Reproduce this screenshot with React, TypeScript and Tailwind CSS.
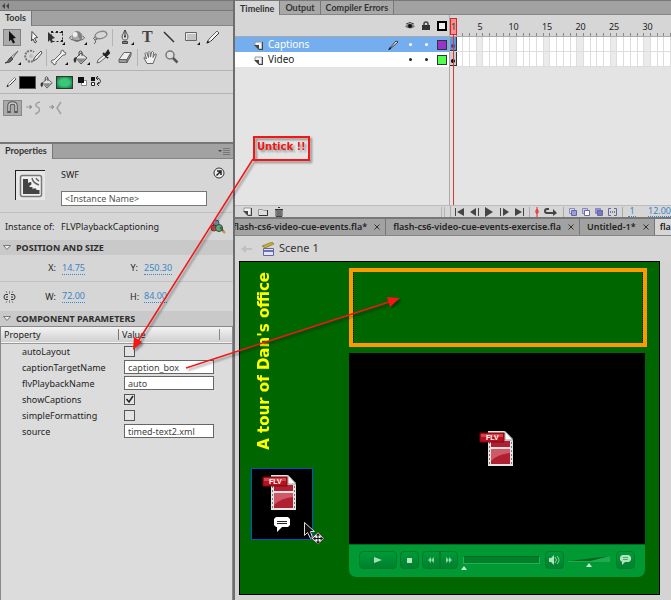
import { useState } from "react";
import type { ReactNode } from "react";
import { clsx } from "clsx";

const UI = "font-['Noto_Sans','Open_Sans',sans-serif]";
const TAB = "font-['Lato','Noto_Sans',sans-serif] font-bold";

const DARK = "#333";

interface GlyphProps {
    children: ReactNode;
    w?: number;
    h?: number;
    box?: string;
}

function Glyph({ children, w = 20, h = 18, box }: GlyphProps) {
    return (
        <svg width={w} height={h} viewBox={box ?? `0 0 ${w} ${h}`} fill="none" className="block shrink-0" aria-hidden="true">
            {children}
        </svg>
    );
}

const corner = <path d="M19 14v3h-3z" fill="#111" />;

const bucket = (
    <>
        <path d="M5 10l5-5 6 5-6 6z" fill="#e4e4e4" stroke="#555" />
        <path d="M6 10.500h9L10 15z" fill="#8a8a8a" />
        <path d="M8 8V4q1-2 3 0v4" stroke="#444" />
        <path d="M5 9c-3 1-3 4-1 6 1-1 2-3 1-6z" fill={DARK} />
    </>
);

const pencil = (
    <>
        <path d="M4 15l2-4 8-8 2 2-8 8z" fill="#f2f2f2" stroke="#666" />
        <path d="M8 13l8-8" stroke="#333" />
        <path d="M3.500 15.500l1-3 2 2z" fill="#111" />
    </>
);

const toolRows: { name: string; icon: ReactNode; gap?: boolean }[][] = [
    [
        { name: "Selection", icon: <path d="M7 3l7 7-3 .5 2 4-2 1-2-4-2 2z" fill="#111" /> },
        { name: "Subselection", icon: <path d="M8 3.500l5.500 6-3 .5 2 4-1.500 1-2-4-1.500 2z" fill="#fff" stroke="#444" /> },
        {
            name: "Free Transform",
            icon: (
                <>
                    <path d="M5.500 4.500h11v9h-11z" stroke="#222" strokeDasharray="2 2" />
                    <path d="M2 4l7 6-3 1 1 3-2 1-1-3-2 2z" fill="#333" />
                    <path d="M5 3h2v2H5zM15 3h2v2h-2zM15 12h2v2h-2zM10 3h2v2h-2z" fill="#222" />
                    {corner}
                </>
            ),
        },
        {
            name: "3D Rotation",
            icon: (
                <>
                    <circle cx="9" cy="8.500" r="5" fill="#aaa" stroke="#888" />
                    <path d="M9 3.500a5 5 0 0 1 4 8q-3-1-4-8z" fill="#808080" />
                    <circle cx="7" cy="6.500" r="2.500" fill="#eee" />
                    <path d="M3 8q-3 2 0 3.500 6 2.500 12 0 3-1.500 0-3.500" stroke="#666" />
                    {corner}
                </>
            ),
        },
        {
            name: "Lasso",
            icon: (
                <>
                    <ellipse cx="11" cy="7" rx="6" ry="3.500" transform="rotate(-15 11 7)" stroke="#888" strokeWidth="1.500" />
                    <path d="M5 9q-3 1 0 3 3 0 1-2M5 12q2 2-1 4" stroke="#666" />
                </>
            ),
        },
        {
            name: "Pen",
            gap: true,
            icon: (
                <>
                    <path d="M10 2L7 8q0 3 1.500 4h3q1.500-1 1.500-4z" fill="#ddd" stroke="#555" />
                    <path d="M10 2v6" stroke="#333" />
                    <circle cx="10" cy="8.500" r="1" fill="#222" />
                    <path d="M7.500 13.500h5v2h-5z" fill="#888" stroke="#444" />
                    {corner}
                </>
            ),
        },
        { name: "Text", icon: <text x="5" y="14" fontSize="16" fontFamily="Liberation Serif, serif" fontWeight="bold" fill="#444">T</text> },
        { name: "Line", icon: <path d="M5 4l10 10" stroke="#333" strokeWidth="1.500" /> },
        {
            name: "Rectangle",
            icon: (
                <>
                    <path d="M4.500 4.500h11v8h-11z" fill="#c4c4c4" stroke="#666" />
                    <path d="M5.500 12V5.500H15" stroke="#eee" />
                    {corner}
                </>
            ),
        },
        { name: "Pencil", icon: pencil },
    ],
    [
        {
            name: "Brush",
            icon: (
                <>
                    <path d="M16 3l-6 8-2-1z" fill="#eee" stroke="#666" />
                    <path d="M9 9l2 2q-2 4-8 4 3-1 4-4z" fill="#666" stroke="#444" />
                    {corner}
                </>
            ),
        },
        {
            name: "Deco",
            icon: (
                <>
                    <path d="M3 12a5 5 0 0 1 7-8" stroke="#777" strokeWidth="2" strokeDasharray="2 1" />
                    <path d="M4 13q4 2 7-2" stroke="#777" strokeWidth="2" strokeDasharray="2 1" />
                    <path d="M17 3l-6 6-2 4 4-2 5-6z" fill="#eee" stroke="#555" />
                    <circle cx="7" cy="8" r="2" fill="#bbb" />
                </>
            ),
        },
        {
            name: "Bone",
            gap: true,
            icon: (
                <>
                    <path d="M5 12l7-7V3l2-1 1 2 2 1-1 2h-2l-7 7v2l-2 1-1-2-2-1 1-2z" fill="#f0f0f0" stroke="#666" />
                    {corner}
                </>
            ),
        },
        { name: "Paint Bucket", icon: <>{bucket}{corner}</> },
        {
            name: "Eyedropper",
            icon: (
                <>
                    <path d="M4 15l1-3 6-5 2 2-6 5z" fill="#eee" stroke="#666" />
                    <path d="M10 5l5 5M12 7l3-4 1 2-3 3z" stroke="#222" strokeWidth="2" />
                </>
            ),
        },
        {
            name: "Eraser",
            icon: (
                <>
                    <path d="M4 11.500l5-7h7l-4 7z" fill="#eee" stroke="#666" />
                    <path d="M4 11.500v3h8v-3zM12 11.500l4-7v3l-4 7z" fill="#999" stroke="#666" />
                </>
            ),
        },
        {
            name: "Hand",
            gap: true,
            icon: (
                <path
                    d="M7 15.500L4 10q0-2 2.500 1L5 5.500q1-2 2 0l1.500 4-.5-5q1-2 2 0l.5 4.500 1-5q1-1.500 2 .5l-.5 5L15 6q2-1 1 2l-2 5-1 2.500z"
                    fill="#f0f0f0"
                    stroke="#666"
                />
            ),
        },
        {
            name: "Zoom",
            icon: (
                <>
                    <circle cx="8" cy="7" r="4" fill="#ddd" stroke="#777" strokeWidth="1.500" />
                    <path d="M11 10l4.500 4.500" stroke="#555" strokeWidth="2.500" />
                </>
            ),
        },
    ],
];

function PanelTabs({ children }: { children: ReactNode }) {
    return <div className="flex h-[15px] items-stretch border-b border-[#858585] bg-[#a2a2a2] text-[#333]">{children}</div>;
}

function ToolsPanel() {
    const [active, setActive] = useState("Selection");

    return (
        <section className="h-[131px] bg-[#d6d6d6]">
            <PanelTabs>
                <h2 className={clsx(TAB, "-mb-px border-r border-[#777] bg-[#d6d6d6] px-[5px] text-[9px] leading-[14px]")}>Tools</h2>
            </PanelTabs>
            <div className="flex flex-col pt-px">
                {toolRows.map((row, i) => (
                    <div key={i} className="flex h-5 items-center pl-px">
                        {row.map((tool) => (
                            <div key={tool.name} className="flex items-center">
                                {tool.gap && <span className="mx-px h-[17px] w-px bg-[#b4b4b4]" />}
                                <button
                                    aria-label={tool.name}
                                    onClick={() => setActive(tool.name)}
                                    className={clsx(
                                        "flex h-[17px] items-center justify-center",
                                        active === tool.name ? "mx-0.5 w-[18px] overflow-hidden border border-[#808080] bg-[#ababab]" : "w-[22px]"
                                    )}
                                >
                                    <Glyph>{tool.icon}</Glyph>
                                </button>
                            </div>
                        ))}
                    </div>
                ))}
            </div>
            <div className="mt-[3px] flex h-[23px] items-center border-t border-[#b2b2b2] pl-1">
                <Glyph w={15} h={14} box="0 0 20 18">{pencil}</Glyph>
                <button aria-label="Stroke color" className="h-[13px] w-[17px] border border-[#555] bg-black" />
                <span className="mr-0.5 ml-1"><Glyph w={14} h={14} box="2 1 16 16">{bucket}</Glyph></span>
                <button aria-label="Fill color" className="h-[13px] w-[17px] border border-[#333] bg-radial from-[#38c878] from-45% to-[#0a6b34]" />
                <button aria-label="Black and white" className="ml-[5px]">
                    <Glyph w={10} h={12}>
                        <path d="M3.500 4.500h5v5h-5z" fill="#fff" stroke="#888" />
                        <path d="M0 1h6v6H0z" fill="#111" />
                    </Glyph>
                </button>
                <button aria-label="Swap colors" className="ml-[3px]">
                    <Glyph w={12} h={12}>
                        <path d="M0 1h4v4H0z" fill="#111" />
                        <path d="M.5 6.500h3v3h-3z" fill="#fff" stroke="#222" />
                        <path d="M5 2h2q2.500 1 2.500 3.500-.5 2.500-3.500 2.500M7 0L5 2l2 2M8 6L6 8l2 2" stroke="#333" />
                    </Glyph>
                </button>
            </div>
            <div className="flex h-[28px] items-center gap-1 border-t border-[#b2b2b2] pl-[3px]">
                <button aria-label="Snap to objects" className="flex h-4 w-[19px] items-center justify-center border border-[#888] bg-[#aaa]">
                    <Glyph w={13} h={13}>
                        <path d="M3 12V5q0-3 3.500-3T10 5v7" stroke="#555" strokeWidth="3.500" />
                        <path d="M3 10V5q0-3 3.500-3T10 5v5" stroke="#ccc" strokeWidth="1.500" />
                    </Glyph>
                </button>
                <button aria-label="Smooth" className="w-[18px]">
                    <Glyph w={18} h={14}>
                        <path d="M0 6h6M4 4l2 2-2 2z" stroke="#999" fill="#999" />
                        <path d="M14 1q-5 1-4 4l3 2q2 4-4 6" stroke="#a0a0a0" strokeWidth="1.500" />
                    </Glyph>
                </button>
                <button aria-label="Straighten" className="w-[18px]">
                    <Glyph w={18} h={14}>
                        <path d="M1 6h5M4 4l2 2-2 2z" stroke="#999" fill="#999" />
                        <path d="M13 1l-4 6 4 6" stroke="#a0a0a0" strokeWidth="1.500" />
                    </Glyph>
                </button>
            </div>
        </section>
    );
}

function SectionTitle({ children }: { children: ReactNode }) {
    return (
        <h3 className={clsx(UI, "flex h-[15px] items-center gap-[5px] bg-[#c9c9c9] pl-[3px] text-[9px] font-bold text-[#2d2d2d]")}>
            <Glyph w={8} h={7}>
                <path d="M.5 1.500h7L4 5.500z" fill="#eee" stroke="#777" />
            </Glyph>
            {children}
        </h3>
    );
}

function HotText({ label, value, className }: { label: string; value: string; className: string }) {
    return (
        <span className="flex items-center">
            <span className={clsx("text-right", className)}>{label}</span>
            <button className="ml-1.5 h-[13px] border-b border-dotted border-[#3a87c8] leading-3 text-[#3a87c8]">{value}</button>
        </span>
    );
}

const params: { name: string; value: string | boolean }[] = [
    { name: "autoLayout", value: false },
    { name: "captionTargetName", value: "caption_box" },
    { name: "flvPlaybackName", value: "auto" },
    { name: "showCaptions", value: true },
    { name: "simpleFormatting", value: false },
    { name: "source", value: "timed-text2.xml" },
];

function PropertiesPanel() {
    return (
        <section className={clsx(UI, "flex grow flex-col border-t-2 border-[#777] bg-[#d6d6d6] text-[9px] text-[#222]")}>
            <PanelTabs>
                <h2 className={clsx(TAB, "-mb-px border-r border-[#777] bg-[#d6d6d6] px-[5px] text-[9px] leading-[14px]")}>Properties</h2>
                <button aria-label="Panel menu" className="mr-[3px] ml-auto">
                    <Glyph w={12} h={8}>
                        <path d="M0 3h4L2 5z" fill="#444" />
                        <path d="M5 1.500h7M5 3.500h7M5 5.500h7M5 7.500h7" stroke="#777" />
                    </Glyph>
                </button>
            </PanelTabs>
            <div className="flex h-[54px] border-b border-[#c0c0c0] pt-[11px]">
                <div className="ml-[15px] flex h-[30px] w-[30px] items-center justify-center border-t border-l border-[#222] bg-[#e6e6e6]">
                    <Glyph w={24} h={24}>
                        <rect x="1.500" y="1.500" width="21" height="21" rx="2" fill="#f0f0f0" stroke="#777" strokeWidth="1.500" />
                        <path d="M4 5h5v4q3-2 3.500 0t-2 3v1h3v2q4-2 4 1h3v4H4z" fill="#444" />
                        <path d="M13 4q1 5 7 7M17 4q1 2 3 3" stroke="#666" strokeWidth="1.500" />
                    </Glyph>
                </div>
                <div className="ml-4 w-[146px]">
                    <div className="h-[21px] leading-[9px]">SWF</div>
                    <input
                        aria-label="Instance name"
                        placeholder="<Instance Name>"
                        className="block h-[15px] w-full border border-[#777] bg-white px-[3px] placeholder:text-[#555]"
                    />
                </div>
                <button aria-label="Help" className="-mt-[3px] ml-1.5 self-start">
                    <Glyph w={12} h={12}>
                        <circle cx="6" cy="6" r="5" fill="#eee" stroke="#333" />
                        <path d="M4 4h4v4M8 4L3.500 8.500" stroke="#222" strokeWidth="1.500" />
                    </Glyph>
                </button>
            </div>
            <div className="flex h-[27px] items-center pl-[5px]">
                <span className="w-[56px] whitespace-nowrap">Instance of:</span>
                <span>FLVPlaybackCaptioning</span>
                <span className="mr-[7px] ml-auto">
                    <Glyph w={16} h={15}>
                        <circle cx="6" cy="4" r="3" fill="#829bc8" stroke="#456" />
                        <circle cx="4" cy="9" r="3" fill="#c95050" stroke="#733" />
                        <circle cx="9" cy="9" r="3.500" fill="#63a878" stroke="#253" />
                        <path d="M10 8l4 5" stroke="#555" strokeWidth="2" />
                        <path d="M13 12l2 2" stroke="#b93" strokeWidth="2" />
                    </Glyph>
                </span>
            </div>
            <SectionTitle>POSITION AND SIZE</SectionTitle>
            <div className="flex h-[27px] items-center border-b border-[#c0c0c0]">
                <HotText label="X:" value="14.75" className="w-14" />
                <span className="w-[45px]" />
                <HotText label="Y:" value="250.30" className="w-2" />
            </div>
            <div className="flex h-[29px] items-center">
                <span className="ml-[3px]">
                    <Glyph w={13} h={12}>
                        <path d="M5 3.500H3Q1 3.500 1 6t2 2.500h2M8 3.500h2q2 0 2 2.500t-2 2.500H8M3 6h2M8 6h2" stroke="#333" />
                        <path d="M3 0l1 2M6.500 0v3M10 0L9 2M3 12l1-2M6.500 12V9M10 12l-1-2" stroke="#888" />
                    </Glyph>
                </span>
                <HotText label="W:" value="72.00" className="w-10" />
                <span className="w-[45px]" />
                <HotText label="H:" value="84.00" className="w-2" />
            </div>
            <SectionTitle>COMPONENT PARAMETERS</SectionTitle>
            <div className="grow border border-b-0 border-[#888] bg-[#dcdcdc]">
                <table className="w-full table-fixed border-collapse">
                    <thead>
                        <tr className="h-4 border-b border-[#999] bg-linear-to-b from-[#f4f4f4] to-[#cfcfcf]">
                            <th className="w-[117px] p-0 pl-[3px] text-left leading-[14px] font-normal">Property</th>
                            <th className="p-0 text-left leading-[14px] font-normal">
                                <span className="flex h-[11px] items-center border-l border-[#777] pl-[3px]">
                                    Value
                                    <span className="mr-3 ml-auto h-[11px] w-px bg-[#888]" />
                                </span>
                            </th>
                        </tr>
                    </thead>
                    <tbody>
                        {params.map(({ name, value }) => (
                            <tr key={name} className="h-4">
                                <td className="p-0 pl-[21px] leading-[15px]">
                                    <label htmlFor={name}>{name}</label>
                                </td>
                                <td className="p-0 pl-1.5">
                                    {typeof value === "boolean" ? (
                                        <span className="relative block h-[11px] w-[11px]">
                                            <input
                                                id={name}
                                                type="checkbox"
                                                defaultChecked={value}
                                                className="peer block h-[11px] w-[11px] appearance-none border border-[#555] bg-[#e4e4e4]"
                                            />
                                            <svg viewBox="0 0 11 11" fill="none" className="pointer-events-none absolute inset-0 hidden peer-checked:block">
                                                <path d="M2.500 5l2.500 3 4-6" stroke="#222" strokeWidth="1.500" />
                                            </svg>
                                        </span>
                                    ) : (
                                        <input id={name} defaultValue={value} className="block h-[14px] w-[90px] border border-[#666] bg-white px-[3px] text-[#444]" />
                                    )}
                                </td>
                            </tr>
                        ))}
                    </tbody>
                </table>
            </div>
        </section>
    );
}

const layers = [
    { name: "Captions", color: "bg-[#9933cc]", selected: true },
    { name: "Video", color: "bg-[#4fff4f]", selected: false },
];

const FRAMES = Array.from({ length: 33 }, (_, i) => i + 1);

function LayerIcon() {
    return (
        <Glyph w={9} h={9}>
            <path d="M1 1h7v7H5L1 4z" fill="#f4f4f4" stroke="#999" />
            <path d="M0 4h5v5zM8 1h1v8H5V8h3z" fill="#444" />
        </Glyph>
    );
}

function Layers() {
    return (
        <div className="w-[215px] shrink-0 border-r border-[#aaa]">
            <div className="flex h-[22px] items-center justify-end gap-1.5 border-b border-[#aaa] bg-[#d6d6d6] pt-px pr-0.5">
                <Glyph w={10} h={10}>
                    <path d="M0 5.500q5-6 10 0-5 4-10 0z" fill="#777" />
                    <circle cx="5" cy="5" r="2" fill="#111" />
                    <path d="M1 3q4-3 8 0" stroke="#444" />
                </Glyph>
                <Glyph w={10} h={10}>
                    <path d="M3 5V3q0-2 2-2t2 2v2" stroke="#444" strokeWidth="1.500" />
                    <path d="M1 4h8v5H1z" fill="#333" />
                </Glyph>
                <span className="h-[10px] w-[10px] border-2 border-black bg-[#eee]" />
            </div>
            {layers.map((layer) => (
                <div
                    key={layer.name}
                    className={clsx("flex h-[15px] items-center pr-0.5 text-[10px] leading-3", layer.selected ? "bg-[#74aeee] text-white" : "bg-white text-[#222]")}
                >
                    <span className="mt-0.5 mr-[5px] ml-[19px]"><LayerIcon /></span>
                    <span className="grow pb-0.5">{layer.name}</span>
                    {layer.selected && (
                        <Glyph w={12} h={12}>
                            <path d="M2 10L9 2l2 1-8 7z" fill="#fff" stroke="#333" />
                            <path d="M1 11l2-3 1 2z" fill="#111" />
                        </Glyph>
                    )}
                    <span className="mr-[13px] ml-[10px] h-[3px] w-[3px] rounded-full bg-current" />
                    <span className="mr-[9px] h-[3px] w-[3px] rounded-full bg-current" />
                    <span className={clsx("h-[10px] w-[10px] border border-[#333]", layer.color)} />
                </div>
            ))}
        </div>
    );
}

function FrameGrid() {
    return (
        <div className="relative min-w-0 grow overflow-hidden">
            <div className="grid h-[22px] grid-cols-[repeat(33,minmax(0,1fr))] border-b border-[#aaa] bg-[#d6d6d6]">
                {FRAMES.map((n) => (
                    <span key={n} className="flex flex-col items-center justify-between pt-[6px] text-[9px] leading-3 text-[#222]">
                        <span className="h-3">{n % 5 === 0 ? n : ""}</span>
                        <span className="h-[3px] w-px self-end bg-[#888]" />
                    </span>
                ))}
            </div>
            {layers.map((layer) => (
                <div key={layer.name} className="grid h-[15px] grid-cols-[repeat(33,minmax(0,1fr))] border-b border-[#ddd] bg-white">
                    {FRAMES.map((n) => (
                        <span
                            key={n}
                            className={clsx(
                                "flex items-end justify-center border-r",
                                n === 1 ? "border-b border-[#333] pb-0.5" : "border-[#ddd]",
                                n === 1 && (layer.selected ? "bg-[#5b97de]" : "bg-[#ccc]"),
                                n % 5 === 0 && "bg-[#ebebeb]"
                            )}
                        >
                            {n === 1 && <span className={clsx("h-1 w-1 shrink-0 rounded-full", layer.selected ? "bg-[#3a4a80]" : "bg-black")} />}
                        </span>
                    ))}
                </div>
            ))}
            {/* playhead */}
            <div className="absolute top-[3px] left-0 h-[17px] w-[7px] border border-[#dd2222] bg-[#ff8888]/90 text-center text-[9px] leading-[15px]">1</div>
            <div className="absolute top-5 bottom-0 left-[3px] w-px bg-[#d33]" />
        </div>
    );
}

function TimelineFooter() {
    return (
        <div className="flex h-3 items-center border-t border-[#bbb] bg-[#d6d6d6] text-[9px] text-[#3a87c8]">
            <div className="flex w-[215px] shrink-0 items-center gap-[6px] pl-2">
                <button aria-label="New layer"><LayerIcon /></button>
                <button aria-label="New folder">
                    <Glyph w={10} h={10}>
                        <path d="M.5 2.500h4l1 1h4v5h-9z" fill="#ddd" stroke="#999" />
                        <path d="M9.500 3v5.500H1" stroke="#333" />
                    </Glyph>
                </button>
                <button aria-label="Delete">
                    <Glyph w={10} h={10}>
                        <path d="M2 3h6v6.500H2z" fill="#aaa" stroke="#444" />
                        <path d="M1 2.500h8M4 .5h2M4 4v5M6 4v5" stroke="#333" />
                    </Glyph>
                </button>
                <span className="mr-[5px] ml-auto h-2.5 w-1 border-x border-[#b4b4b4]" />
            </div>
            <div className="flex grow items-center gap-[5px] border-l border-[#aaa] pl-[3px] whitespace-nowrap">
                {[
                    { name: "First frame", d: "M1 1h1v8H1zM10 1v8L3 5z" },
                    { name: "Step back", d: "M7 1v8L1 5zM9 1h1v8H9z" },
                    { name: "Play", d: "M1 0l8 5-8 5z" },
                    { name: "Step forward", d: "M1 1h1v8H1zM4 1l6 4-6 4z" },
                    { name: "Last frame", d: "M1 1l7 4-7 4zM9 1h1v8H9z" },
                ].map((b) => (
                    <button key={b.name} aria-label={b.name}>
                        <Glyph w={10} h={10}><path d={b.d} fill="#444" /></Glyph>
                    </button>
                ))}
                <span className="h-2.5 w-px bg-[#aaa]" />
                <Glyph w={4} h={10}><path d="M2 0v10M1 3h2v3H1z" stroke="#e22" /></Glyph>
                <Glyph w={14} h={10}>
                    <path d="M5 2H3Q1 2 1 4t2 2h7" stroke="#444" strokeWidth="2" />
                    <path d="M9 2l4 4-4 3z" fill="#444" />
                </Glyph>
                <span className="h-2.5 w-px bg-[#aaa]" />
                {[
                    { front: "#9c9cdc", back: "#dcdcf2" },
                    { front: "#fff", back: "#c8c8ee" },
                    { front: "#7777c0", back: "#9494d0" },
                ].map(({ front, back }) => (
                    <Glyph key={front} w={8} h={10}>
                        <path d="M.5 1.500h5v5h-5z" fill={back} stroke="#8888bb" />
                        <path d="M2.500 3.500h5v5h-5z" fill={front} stroke="#6666aa" />
                    </Glyph>
                ))}
                <Glyph w={9} h={10}>
                    <path d="M3 1.500H.5v7H3M6 1.500h2.500v7H6" stroke="#6666aa" />
                    <path d="M2 4.500h1v1H2zM4 4.500h1v1H4zM6 4.500h1v1H6z" fill="#222" />
                </Glyph>
                <span className="h-2.5 w-px bg-[#aaa]" />
                <button className="w-2 border-b border-dotted leading-[10px]">1</button>
                <button className="ml-[7px] border-b border-dotted leading-[10px]">12.00</button>
            </div>
        </div>
    );
}

const docs = ["flash-cs6-video-cue-events.fla*", "flash-cs6-video-cue-events-exercise.fla", "Untitled-1*"];

function DocumentTabs() {
    return (
        <nav className={clsx(UI, "flex h-[17px] overflow-hidden border-b border-[#858585] bg-[#a2a2a2] text-[9px] leading-4 font-semibold whitespace-nowrap text-[#222]")}>
            {docs.map((doc, i) => (
                <div key={doc} className={clsx("flex shrink-0 items-center gap-[7px] border-r border-[#777] pr-[5px]", i > 0 ? "pl-[7px]" : "-ml-0.5")}>
                    <button>{doc}</button>
                    <button aria-label={`Close ${doc}`}>
                        <Glyph w={6} h={6}><path d="M.5 .5l5 5M5.500 .5l-5 5" stroke="#333" /></Glyph>
                    </button>
                </div>
            ))}
            <button className="grow bg-[#d6d6d6] pl-[5px] text-left">fla</button>
        </nav>
    );
}

function FlvIcon() {
    return (
        <svg width="36" height="38" viewBox="0 0 36 38" fill="none" aria-hidden="true">
            <path d="M9 1h17l8 8v27H9z" fill="#e4e4e4" />
            <path d="M26 1l8 9h-8z" fill="#fff" stroke="#444" strokeWidth=".5" />
            <path d="M12 11h19v6H12zM12 19h19v15H12z" fill="#b02030" />
            <path d="M12 19h19v4q-12 1-19 8z" fill="#cf5a66" />
            <path d="M10.500 12v24M32.500 12v24" stroke="#777" strokeDasharray="2 2" />
            <path d="M1 3h24v9H1z" fill="#b8101c" stroke="#7d0a12" />
            <path d="M2 4h22v3H2z" fill="#d8404a" />
            <text x="7" y="10" fontSize="7" fontWeight="bold" fontFamily="Liberation Sans, sans-serif" fill="#fff">FLV</text>
        </svg>
    );
}

const playerButton = "flex h-[18px] shrink-0 items-center justify-center rounded-[4px] border border-[#007a2c] bg-linear-to-b from-[#009a38] to-[#00802c]";

function PlayerBar() {
    return (
        <div className="flex h-[33px] items-center rounded-b-[7px] border-t border-[#006a20] bg-[#009933] px-2.5 pb-0.5">
            <button aria-label="Play" className={clsx(playerButton, "w-[38px]")}>
                <Glyph w={8} h={6}><path d="M0 0l8 3-8 3z" fill="#a9dcb8" /></Glyph>
            </button>
            <button aria-label="Stop" className={clsx(playerButton, "ml-[3px] w-[19px]")}>
                <span className="h-[5px] w-[5px] bg-[#b9e3c5]" />
            </button>
            <button aria-label="Rewind" className={clsx(playerButton, "ml-[3px] w-[18px] rounded-r-none")}>
                <Glyph w={6} h={6}><path d="M3 0v6L0 3zM6 0v6L3 3z" fill="#8fd0a3" /></Glyph>
            </button>
            <button aria-label="Forward" className={clsx(playerButton, "w-[18px] rounded-l-none")}>
                <Glyph w={6} h={6}><path d="M0 0v6l3-3zM3 0v6l3-3z" fill="#8fd0a3" /></Glyph>
            </button>
            <div className="relative ml-[5px] h-2 grow border border-[#2aab55] border-t-[#006622] bg-[#008029]">
                <span className="absolute top-[9px] -left-[3px]">
                    <Glyph w={6} h={4}><path d="M3 0l3 4H0z" fill="#c9ebd2" /></Glyph>
                </span>
            </div>
            <button aria-label="Mute" className={clsx(playerButton, "ml-[5px] w-[19px]")}>
                <Glyph w={11} h={10}>
                    <path d="M0 3h2l3-3v10L2 7H0z" fill="#b5e0c0" />
                    <path d="M6 2q3 3 0 6M8 1q4 4 0 8" stroke="#8fd0a3" />
                </Glyph>
            </button>
            <span className="mr-1.5 ml-1">
                <Glyph w={42} h={14}>
                    <path d="M0 8L42 3v6H0z" fill="#1faa4c" />
                    <path d="M0 8L42 3 22 8z" fill="#006622" />
                    <path d="M21 10l3 4h-6z" fill="#c9ebd2" />
                </Glyph>
            </span>
            <button aria-label="Captions" className={clsx(playerButton, "w-[19px]")}>
                <Glyph w={11} h={10}>
                    <path d="M2 0h7l2 2v3L9 7H5L2 10V7L0 5V2z" fill="#b5e0c0" />
                    <path d="M3 2.500h5M3 4.500h5" stroke="#4dab6c" />
                </Glyph>
            </button>
        </div>
    );
}

function Stage() {
    return (
        <div className="grow bg-[#d4d4d4] pl-1">
            <div className="relative h-[334px] w-[421px] border border-black bg-[#006600]">
                <p className="absolute top-[10px] left-[14px] rotate-180 font-['DejaVu_Sans',sans-serif] text-[15px] leading-5 font-bold whitespace-nowrap text-[#ffff00] [writing-mode:vertical-rl]">
                    A tour of Dan's office
                </p>
                <div className="absolute top-1.5 left-[109px] h-[79px] w-[298px] border-4 border-[#ff9900]">
                    <div className="h-full border-x border-dotted border-[#002a00]" />
                </div>
                <div className="absolute top-[91px] left-[109px] w-[296px]">
                    <div className="flex h-[191px] items-center justify-center bg-black">
                        <FlvIcon />
                    </div>
                    <PlayerBar />
                </div>
                <div className="absolute top-[206px] left-[11px] flex h-[72px] w-[62px] flex-col items-center border border-[#0055cc] bg-black pt-[5px]">
                    <span className="pr-1"><FlvIcon /></span>
                    <span className="mt-[5px]">
                        <Glyph w={16} h={15}>
                            <path d="M2 0h12l2 2v6l-2 2H8l-5 5v-5H2L0 8V2z" fill="#fff" />
                            <path d="M3 4.500h10M3 6.500h10" stroke="#222" />
                        </Glyph>
                    </span>
                </div>
                <span className="absolute top-[259px] left-[63px]">
                    <Glyph w={22} h={24}>
                        <path d="M1.500 1.500v13l3-3 3 6 2-1-2-6h4z" fill="#111" stroke="#ddd" />
                        <path d="M15 11l6 6.500-6 6-6.500-6z" fill="#f4f4f4" stroke="#111" strokeWidth=".5" />
                        <path d="M15 13v9M10.500 17.500h9" stroke="#111" />
                        <path d="M15 12l2 2.500h-4zM15 23l2-2.500h-4zM10 17.500l2.500-2v4zM20 17.500l-2.500-2v4z" fill="#111" />
                    </Glyph>
                </span>
            </div>
        </div>
    );
}

function Workspace() {
    return (
        <main className={clsx(UI, "flex min-w-0 grow flex-col text-[#333]")}>
            <div className="flex h-[15px] border-t border-[#777] bg-[#a2a2a2] text-[9px]">
                {["Timeline", "Output", "Compiler Errors"].map((tab, i) => (
                    <button
                        key={tab}
                        className={clsx(TAB, "border-r border-[#777] px-[5px] leading-[13px]", i === 0 ? "bg-[#d6d6d6]" : "border-b border-b-[#858585] bg-[#a8a8a8]")}
                    >
                        {tab}
                    </button>
                ))}
                <span className="grow border-b border-[#858585]" />
            </div>
            <div className="flex h-[190px] bg-[#e4e4e4]">
                <Layers />
                <FrameGrid />
            </div>
            <TimelineFooter />
            <div className="h-0.5 bg-[#777]" />
            <DocumentTabs />
            <div className="flex h-[25px] items-center bg-[#d6d6d6] pl-1.5 text-[11px]">
                <Glyph w={12} h={10}><path d="M0 5l5-4v3h6v2H5v3z" fill="#c0c0c0" /></Glyph>
                <span className="mr-1 ml-[9px]">
                    <Glyph w={13} h={14}>
                        <path d="M1.500 6.500h10v7h-10z" fill="#e4e4f4" stroke="#6666aa" />
                        <path d="M2 8h9v2H2z" fill="#6f6fc0" />
                        <path d="M0 4l10-4 2 2-9 4z" fill="#c4b030" stroke="#665a10" strokeWidth=".5" />
                    </Glyph>
                </span>
                Scene 1
            </div>
            <Stage />
        </main>
    );
}

// Red notes drawn over the whole workspace
function Annotations() {
    return (
        <div className="pointer-events-none absolute inset-0 overflow-hidden">
            <svg width="671" height="600" fill="none" className="absolute top-0 left-0 drop-shadow-[2px_2px_1px_rgba(0,0,0,0.4)]">
                <path d="M253 159L137 343M186 368l206-67" stroke="#f51515" strokeWidth="1.500" />
                <path d="M133 350l1-13 8 5zM400 298l-10 9-3-10z" fill="#f51515" />
            </svg>
            <div className="absolute top-[136px] left-[253px] h-[25px] w-[57px] border-2 border-[#f51515] pl-0.5 font-['DejaVu_Sans',sans-serif] text-[10px] leading-[18px] font-bold whitespace-nowrap text-[#f51515] drop-shadow-[2px_2px_1px_rgba(0,0,0,0.4)]">
                Untick !!
            </div>
        </div>
    );
}

export default function App() {
    return (
        <div className="relative flex min-h-screen overflow-hidden bg-[#d6d6d6]">
            <aside className="flex w-[233px] shrink-0 flex-col">
                <div className="flex h-[11px] items-center border-y border-[#777] bg-[#969696] pl-0.5">
                    <button aria-label="Collapse">
                        <Glyph w={8} h={6}><path d="M3 0v6L0 3zM7 0v6L4 3z" fill="#444" /></Glyph>
                    </button>
                </div>
                <ToolsPanel />
                <PropertiesPanel />
            </aside>
            <div className="w-0.5 shrink-0 bg-[#6e6e6e]" />
            <Workspace />
            <Annotations />
        </div>
    );
}
